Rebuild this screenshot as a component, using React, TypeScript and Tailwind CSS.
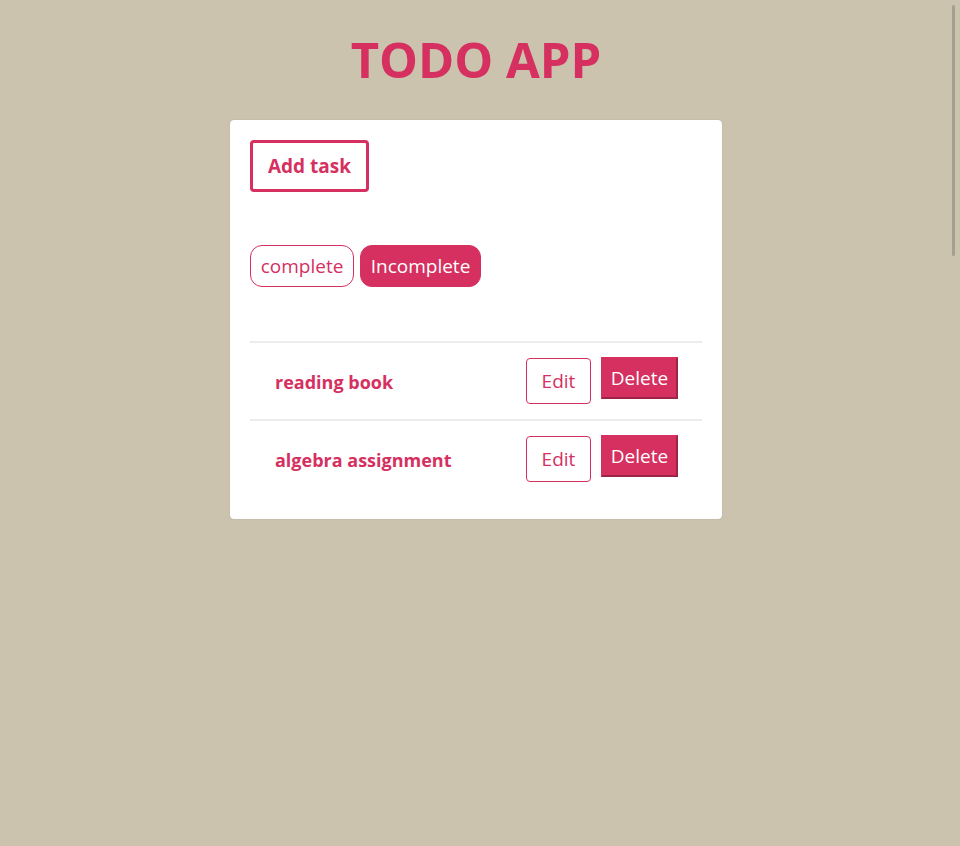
import { useState } from 'react';

const tasks = [
  { id: 1, title: 'reading book' },
  { id: 2, title: 'algebra assignment' },
];

export default function App() {
  const [filter, setFilter] = useState('incomplete');

  return (
    <div
      className="min-h-screen bg-[#cbc3ae]"
      style={{ fontFamily: '"Open Sans", "Noto Sans", sans-serif' }}
    >
      {/* thin scrollbar thumb */}
      <div className="fixed top-[5px] left-[952px] w-[3px] h-[251px] rounded-full bg-[#a49e93]" />

      <div className="w-[952px] flex flex-col items-center pt-[29px] pb-10">
        <h1 className="text-[49px] leading-[60px] font-bold text-[#d5305f] mb-[31px]">TODO APP</h1>

        <div className="w-[492px] bg-white rounded px-5 pt-5 pb-[22px] shadow-[0_0_1px_rgba(0,0,0,0.3)]">
          <button className="w-[119px] h-[52px] border-[3px] border-[#d5305f] rounded text-[19px] font-bold text-[#d5305f]">
            Add task
          </button>

          <div className="flex gap-[6px] mt-[53px]">
            <button
              onClick={() => setFilter('complete')}
              className={`w-[104px] h-[42px] rounded-xl border text-[19px] ${
                filter === 'complete' ? 'bg-[#d5305f] border-[#d5305f] text-white' : 'bg-white border-[#d5305f] text-[#d5305f]'
              }`}
            >
              complete
            </button>
            <button
              onClick={() => setFilter('incomplete')}
              className={`w-[121px] h-[42px] rounded-xl border text-[19px] ${
                filter === 'incomplete' ? 'bg-[#d5305f] border-[#d5305f] text-white' : 'bg-white border-[#d5305f] text-[#d5305f]'
              }`}
            >
              Incomplete
            </button>
          </div>

          <div className="mt-[54px]">
            {tasks.map((task) => (
              <div key={task.id} className="flex items-start justify-between border-t-2 border-[#ececec] pl-[25px] pr-[24px] h-[78px]">
                <span className="mt-[26px] text-[18px] font-bold text-[#d5305f]">{task.title}</span>
                <div className="flex items-start gap-[10px] mt-[14px]">
                  <button className="mt-px w-[65px] h-[46px] border border-[#d5305f] rounded text-[19px] text-[#d5305f]">
                    Edit
                  </button>
                  <button className="w-[77px] h-[42px] bg-[#d5305f] border-2 border-t-[#d5305f] border-l-[#d5305f] border-b-[#9c2446] border-r-[#9c2446] text-[19px] text-white">
                    Delete
                  </button>
                </div>
              </div>
            ))}
          </div>
        </div>
      </div>
    </div>
  );
}
